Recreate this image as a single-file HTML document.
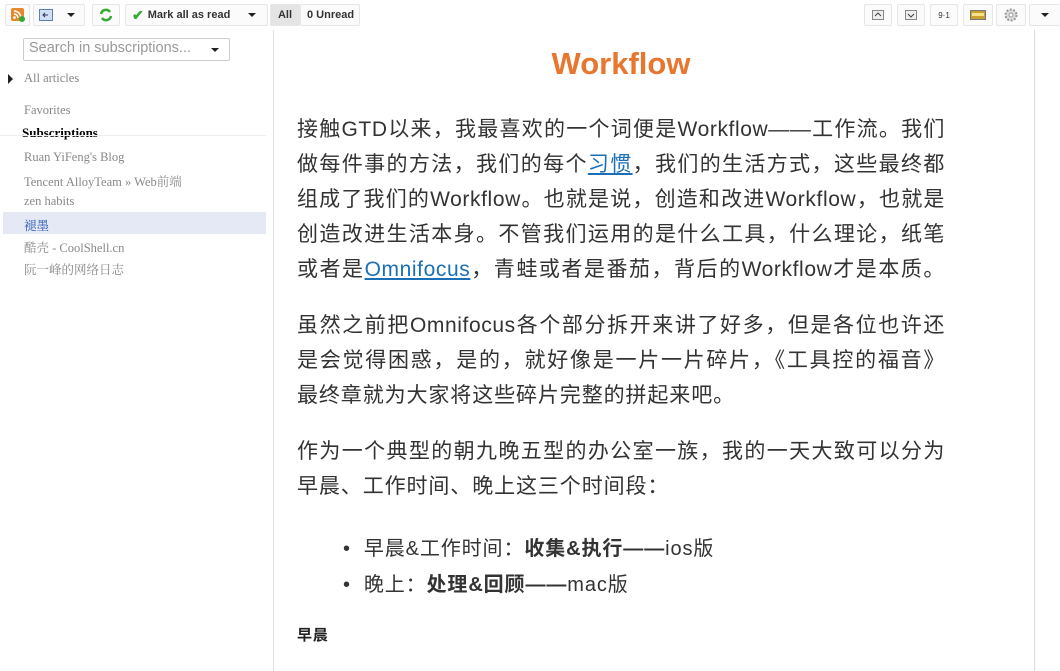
<!DOCTYPE html>
<html><head><meta charset="utf-8"><style>
body{margin:0;width:1060px;height:671px;overflow:hidden;background:#fff;font-family:"Liberation Sans","Noto Sans CJK SC",sans-serif;position:relative}
.btn{position:absolute;top:4px;height:22px;border:1px solid #e6e6e6;border-radius:2px;background:#fbfbfb;box-sizing:border-box;font-size:11px;font-weight:bold;color:#333;display:flex;align-items:center;justify-content:center}
.tri{width:0;height:0;border-left:4px solid transparent;border-right:4px solid transparent;border-top:4px solid #222}
.side{position:absolute;left:0;top:30px;width:273px;height:641px;border-right:1px solid #e3e3e3}
.s{position:absolute;left:24px;font-family:"Liberation Serif","Noto Serif CJK SC",serif;font-size:12.5px;color:#888;white-space:nowrap}
.main{position:absolute;left:297px;top:0;width:660px;font-family:"Liberation Sans","Noto Sans CJK SC",sans-serif;font-size:21px;line-height:35px;color:#333;letter-spacing:0.9px;white-space:nowrap}
.main p{margin:0}
.j{display:block;width:648px;text-align:justify;text-align-last:justify;text-justify:inter-character;white-space:normal;letter-spacing:0.6px}
a{color:#1a6fb6;text-decoration:underline}
</style></head><body>
<div class="btn" style="left:5px;width:25px"><svg width="14" height="14"><rect width="13" height="13" rx="2" fill="#e8882c"/><circle cx="3.5" cy="9.5" r="1.3" fill="#fff"/><path d="M3 6a4 4 0 014 4M3 3a7 7 0 017 7" stroke="#fff" stroke-width="1.5" fill="none"/><circle cx="11" cy="11" r="3" fill="#3a3"/></svg></div>
<div class="btn" style="left:33px;width:52px;justify-content:flex-start;padding-left:5px"><svg width="14" height="12"><rect x=".5" y=".5" width="13" height="11" fill="#cfe0f5" stroke="#5b7fb5"/><path d="M9 6H4M6 4L4 6l2 2" stroke="#335" fill="none"/></svg><span class="tri" style="margin-left:14px"></span></div>
<div class="btn" style="left:92px;width:28px"><svg width="14" height="14"><path d="M2 6a5 5 0 019-2M12 8a5 5 0 01-9 2" stroke="#3a3" stroke-width="2.5" fill="none"/></svg></div>
<div class="btn" style="left:125px;width:143px;justify-content:flex-start;padding-left:6px"><span style="color:#3a3;font-size:14px;margin-right:4px">✔</span>Mark all as read<span class="tri" style="margin-left:18px"></span></div>
<div class="btn" style="left:270px;width:30px;background:#e4e4e4">All</div>
<div class="btn" style="left:300px;width:60px;justify-content:flex-start;padding-left:6px">0 Unread</div>
<div class="btn" style="left:864px;width:28px"><svg width="12" height="10"><rect x=".5" y=".5" width="11" height="9" fill="#eee" stroke="#888"/><path d="M3 6l3-3 3 3" stroke="#444" fill="none"/></svg></div>
<div class="btn" style="left:897px;width:28px"><svg width="12" height="10"><rect x=".5" y=".5" width="11" height="9" fill="#eee" stroke="#888"/><path d="M3 4l3 3 3-3" stroke="#444" fill="none"/></svg></div>
<div class="btn" style="left:930px;width:28px;font-size:8px;font-weight:normal">9·1</div>
<div class="btn" style="left:963px;width:30px"><svg width="16" height="10"><rect x=".5" y=".5" width="15" height="9" fill="#c8a12e" stroke="#777"/><rect x="2" y="3" width="12" height="3" fill="#f3e28a"/></svg></div>
<div class="btn" style="left:996px;width:30px"><svg width="14" height="14"><circle cx="7" cy="7" r="5.5" fill="#ddd" stroke="#999" stroke-width="2" stroke-dasharray="2 1.5"/><circle cx="7" cy="7" r="2" fill="#fff" stroke="#999"/></svg></div>
<div class="btn" style="left:1029px;width:31px;border-right:none"><span class="tri"></span></div>
<div class="side">
<div style="position:absolute;left:23px;top:8px;width:207px;height:23px;border:1px solid #ccc;border-radius:2px;box-sizing:border-box;font-size:14.5px;color:#999;padding:1px 5px">Search in subscriptions...<span class="tri" style="position:absolute;right:10px;top:9px"></span></div>
<div style="position:absolute;left:8px;top:44px;width:0;height:0;border-top:5px solid transparent;border-bottom:5px solid transparent;border-left:5px solid #222"></div>
<div class="s" style="top:41px">All articles</div>
<div class="s" style="top:73px">Favorites</div>
<div class="s" style="top:95px;color:#000;font-weight:bold;font-size:13px;left:22px">Subscriptions</div>
<div style="position:absolute;left:0;width:266px;border-top:1px solid #eee;top:105px"></div>
<div class="s" style="top:120px">Ruan YiFeng's Blog</div>
<div class="s" style="top:142px">Tencent AlloyTeam » Web前端</div>
<div class="s" style="top:164px">zen habits</div>
<div style="position:absolute;left:3px;top:182px;width:263px;height:22px;background:#e4e9f5"></div>
<div class="s" style="top:186px;color:#2a55b0">褪墨</div>
<div class="s" style="top:208px">酷壳 - CoolShell.cn</div>
<div class="s" style="top:230px">阮一峰的网络日志</div>
</div>
<div style="position:absolute;left:1034px;top:30px;height:641px;border-left:1px solid #ddd"></div>
<div style="position:absolute;left:297px;width:648px;top:46px;text-align:center;font-size:31px;font-weight:bold;color:#e8762f">Workflow</div>
<div class="main">
<p style="position:absolute;top:112px"><span class="j">接触GTD以来，我最喜欢的一个词便是Workflow——工作流。我们</span><span class="j">做每件事的方法，我们的每个<a>习惯</a>，我们的生活方式，这些最终都</span><span class="j">组成了我们的Workflow。也就是说，创造和改进Workflow，也就是</span><span class="j">创造改进生活本身。不管我们运用的是什么工具，什么理论，纸笔</span><span class="j">或者是<a>Omnifocus</a>，青蛙或者是番茄，背后的Workflow才是本质。</span></p>
<p style="position:absolute;top:308px"><span class="j">虽然之前把Omnifocus各个部分拆开来讲了好多，但是各位也许还</span><span class="j">是会觉得困惑，是的，就好像是一片一片碎片，《工具控的福音》</span>最终章就为大家将这些碎片完整的拼起来吧。</p>
<p style="position:absolute;top:434px"><span class="j">作为一个典型的朝九晚五型的办公室一族，我的一天大致可以分为</span>早晨、工作时间、晚上这三个时间段：</p>
<p style="position:absolute;top:532px;left:46px;font-size:20px">•&nbsp;&nbsp;早晨&amp;工作时间：<b>收集&amp;执行——</b>ios版</p>
<p style="position:absolute;top:568px;left:46px;font-size:20px">•&nbsp;&nbsp;晚上：<b>处理&amp;回顾——</b>mac版</p>
<p style="position:absolute;top:618px;font-size:15px;font-weight:bold;color:#222">早晨</p>
</div>
</body></html>
